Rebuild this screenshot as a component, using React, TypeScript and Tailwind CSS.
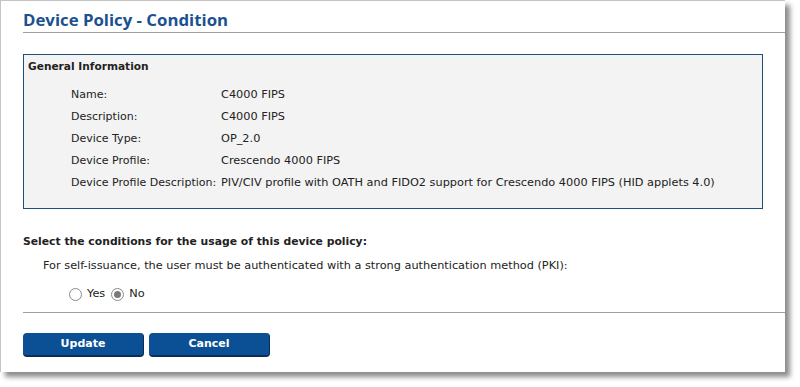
import React from 'react';

const rows: [string, string][] = [
    ['Name:', 'C4000 FIPS'],
    ['Description:', 'C4000 FIPS'],
    ['Device Type:', 'OP_2.0'],
    ['Device Profile:', 'Crescendo 4000 FIPS'],
    ['Device Profile Description:', 'PIV/CIV profile with OATH and FIDO2 support for Crescendo 4000 FIPS (HID applets 4.0)'],
];

const Radio: React.FC<{ checked?: boolean; label: string }> = ({ checked, label }) => (
    <label className="flex items-center gap-[5px]">
        <span className="w-[13px] h-[13px] rounded-full border border-[#8a8a8a] bg-white flex items-center justify-center">
            {checked && <span className="w-[7px] h-[7px] rounded-full bg-[#7a7a7a]" />}
        </span>
        <span>{label}</span>
    </label>
);

export default function App() {
    return (
        <div className="w-[800px] h-[387px] bg-white">
            <div
                className="w-[785px] h-[372px] bg-white border-t border-l border-[#c4c4c4] shadow-[5px_5px_5px_rgba(0,0,0,0.45)] text-[11.3px] text-[#222]"
                style={{ fontFamily: '"DejaVu Sans", sans-serif' }}
            >
                {/* Title */}
                <div className="pl-[22px] pt-[8px]">
                    <h1
                        className="text-[16.8px] font-bold text-[#1b5190] leading-[22px] h-[23px]"
                        style={{ fontFamily: '"Open Sans", sans-serif' }}
                    >
                        Device Policy - Condition
                    </h1>
                    <div className="border-t border-[#a0a0a0]" />
                </div>

                {/* General info box */}
                <div className="ml-[22px] mr-[22px] mt-[21px] h-[155px] border border-[#1f4e79] bg-[#f3f3f3]">
                    <div className="pl-[4px] pt-[3px] font-bold leading-[16px] text-[10.6px]">General Information</div>
                    <div className="pl-[47px] pt-[10px]">
                        {rows.map(([k, v]) => (
                            <div key={k} className="flex leading-[22px]">
                                <span className="w-[150px] shrink-0 whitespace-nowrap text-[11px]">{k}</span>
                                <span className="whitespace-nowrap">{v}</span>
                            </div>
                        ))}
                    </div>
                </div>

                {/* Conditions */}
                <div className="pl-[22px] pt-[25px]">
                    <div className="font-bold leading-[16px] text-[10.8px]">Select the conditions for the usage of this device policy:</div>
                    <div className="pl-[20px] pt-[8px] leading-[16px]">
                        For self-issuance, the user must be authenticated with a strong authentication method (PKI):
                    </div>
                    <div className="pl-[46px] pt-[12px] flex items-center gap-[6px] leading-[16px]">
                        <Radio label="Yes" />
                        <Radio checked label="No" />
                    </div>
                    <div className="mt-[10px] border-t border-[#a0a0a0]" />
                </div>

                {/* Buttons */}
                <div className="pl-[22px] pt-[20px] flex gap-[5px]">
                    <button className="w-[121px] h-[24px] rounded-[4px] bg-[#0b4f94] border-b-2 border-r border-[#0a2e55] text-white font-bold text-[11px]">
                        Update
                    </button>
                    <button className="w-[121px] h-[24px] rounded-[4px] bg-[#0b4f94] border-b-2 border-r border-[#0a2e55] text-white font-bold text-[11px]">
                        Cancel
                    </button>
                </div>
            </div>
        </div>
    );
}
